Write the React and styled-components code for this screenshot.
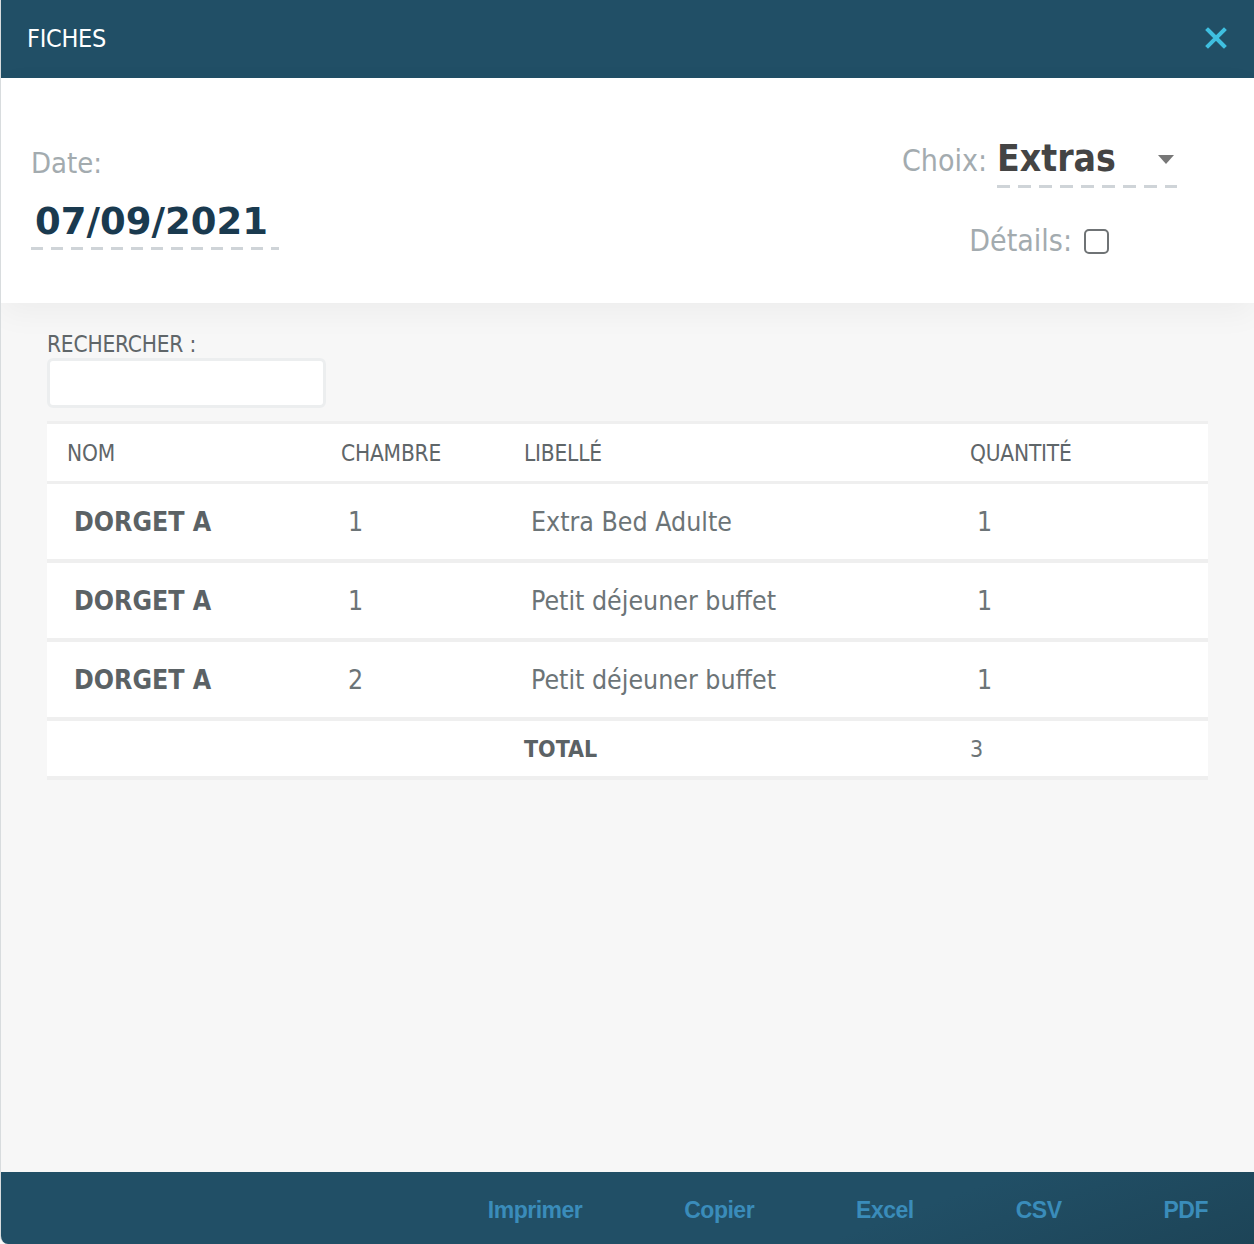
import React from "react";
import styled, { createGlobalStyle } from "styled-components";

const GlobalStyle = createGlobalStyle`
  html, body {
    margin: 0;
    padding: 0;
    background: #f7f7f7;
  }
  * {
    box-sizing: border-box;
  }
`;

const dashed = (period, dash) => `
  background-image: linear-gradient(to right, #cfd4d8 ${dash}px, transparent ${dash}px);
  background-size: ${period}px 3px;
  background-repeat: repeat-x;
  background-position: left bottom;
`;

const Modal = styled.div`
  height: 100vh;
  display: flex;
  flex-direction: column;
  font-family: "DejaVu Sans Condensed", "DejaVu Sans", sans-serif;
  background: #f7f7f7;
  border-left: 1px solid #d8dcde;
  border-bottom-left-radius: 8px;
  overflow: hidden;
`;

const Header = styled.div`
  height: 78px;
  flex-shrink: 0;
  background: #214f66;
  display: flex;
  align-items: center;
  justify-content: space-between;
  padding: 0 26px 2px 26px;
`;

const Title = styled.span`
  color: #fff;
  font-size: 25px;
  letter-spacing: -0.3px;
`;

const CloseButton = styled.button`
  background: none;
  border: none;
  padding: 0;
  width: 24px;
  height: 24px;
  display: flex;
  align-items: center;
  justify-content: center;
  cursor: pointer;
`;

//Filters
const FilterPanel = styled.div`
  height: 225px;
  flex-shrink: 0;
  background: #fff;
  display: flex;
  justify-content: space-between;
  padding: 68px 77px 0 30px;
  box-shadow: 0 10px 30px rgba(0, 0, 0, 0.045);
  position: relative;
  z-index: 1;
`;

const DateBlock = styled.div`
  display: flex;
  flex-direction: column;
`;

const Label = styled.span`
  color: #a3abaf;
  font-size: ${(p) => p.size || 29}px;
  line-height: 34px;
`;

const DateValue = styled.div`
  margin-top: 17px;
  font-family: "DejaVu Sans", sans-serif;
  font-weight: bold;
  font-size: 37px;
  color: #1a3a4f;
  padding: 0 6px 3px 4px;
  width: 248px;
  line-height: 50px;
  ${dashed(20, 12)}
`;

const ChoiceBlock = styled.div`
  display: flex;
  flex-direction: column;
  align-items: flex-end;
`;

const ChoiceRow = styled.div`
  display: flex;
  align-items: center;
  margin-top: -13px;
`;

const Select = styled.div`
  margin-left: 10px;
  width: 180px;
  display: flex;
  align-items: center;
  justify-content: space-between;
  padding: 0 2px 3px 0;
  font-weight: bold;
  font-size: 37px;
  color: #444;
  line-height: 52px;
  ${dashed(21, 13)}
`;

const Caret = styled.span`
  width: 0;
  height: 0;
  border-left: 8px solid transparent;
  border-right: 8px solid transparent;
  border-top: 9px solid #777;
  margin-right: 1px;
`;

const DetailsRow = styled.div`
  display: flex;
  align-items: center;
  margin-top: 36px;
  margin-right: 68px;
`;

const Checkbox = styled.span`
  width: 25px;
  height: 25px;
  margin-left: 12px;
  border: 2px solid #6f7375;
  border-radius: 5px;
  background: #fff;
`;

//Table area
const Body = styled.div`
  flex: 1;
  padding: 28px 46px 0 46px;
`;

const SearchLabel = styled.div`
  color: #5f6669;
  font-size: 22.5px;
  letter-spacing: -0.2px;
`;

const SearchInput = styled.input`
  display: block;
  margin-top: 1px;
  width: 279px;
  height: 50px;
  border: 3px solid #eceeef;
  border-radius: 6px;
  background: #fff;
  outline: none;
`;

const Table = styled.div`
  margin-top: 13px;
  border-top: 3px solid #efefef;
`;

const Row = styled.div`
  display: grid;
  grid-template-columns: 274px 183px 446px 1fr;
  align-items: center;
  height: ${(p) => p.h}px;
  background: #fff;
  border-bottom: ${(p) => p.border}px solid #efefef;
`;

const HeadCell = styled.div`
  padding-left: 20px;
  color: #5f6669;
  font-size: 22.5px;
  letter-spacing: -0.2px;
`;

const Cell = styled.div`
  padding-left: ${(p) => (p.tight ? 20 : 27)}px;
  color: ${(p) => (p.bold ? "#5b6265" : "#6c7477")};
  font-weight: ${(p) => (p.bold ? "bold" : "normal")};
  font-size: ${(p) => p.size || 26.5}px;
`;

const Footer = styled.div`
  height: 72px;
  flex-shrink: 0;
  background: linear-gradient(160deg, #214f66 70%, #1d4457 100%);
  display: flex;
  justify-content: flex-end;
  align-items: center;
  padding: 4px 46px 0 0;
`;

const ExportButton = styled.button`
  background: none;
  border: none;
  padding: 0;
  margin-left: ${(p) => p.gap}px;
  font-family: "Liberation Sans", Arial, sans-serif;
  font-weight: bold;
  font-size: 23px;
  letter-spacing: -0.5px;
  color: #3a8cba;
  cursor: pointer;
`;

const rows = [
  { nom: "DORGET A", chambre: "1", libelle: "Extra Bed Adulte", qte: "1" },
  { nom: "DORGET A", chambre: "1", libelle: "Petit déjeuner buffet", qte: "1" },
  { nom: "DORGET A", chambre: "2", libelle: "Petit déjeuner buffet", qte: "1" },
];

const exports = [
  { label: "Imprimer", gap: 0 },
  { label: "Copier", gap: 102 },
  { label: "Excel", gap: 102 },
  { label: "CSV", gap: 102 },
  { label: "PDF", gap: 102 },
];

const App = () => {
  return (
    <>
      <GlobalStyle />
      <Modal>
        <Header>
          <Title>FICHES</Title>
          <CloseButton>
            <svg width="22" height="22" viewBox="0 0 22 22">
              <path
                d="M3 3 L19 19 M19 3 L3 19"
                stroke="#3fbfe0"
                strokeWidth="4"
                strokeLinecap="square"
              />
            </svg>
          </CloseButton>
        </Header>

        <FilterPanel>
          <DateBlock>
            <Label>Date:</Label>
            <DateValue>07/09/2021</DateValue>
          </DateBlock>
          <ChoiceBlock>
            <ChoiceRow>
              <Label size={30}>Choix:</Label>
              <Select>
                Extras
                <Caret />
              </Select>
            </ChoiceRow>
            <DetailsRow>
              <Label size={30}>Détails:</Label>
              <Checkbox />
            </DetailsRow>
          </ChoiceBlock>
        </FilterPanel>

        <Body>
          <SearchLabel>RECHERCHER :</SearchLabel>
          <SearchInput type="text" />
          <Table>
            <Row h={60} border={3}>
              <HeadCell>NOM</HeadCell>
              <HeadCell>CHAMBRE</HeadCell>
              <HeadCell>LIBELLÉ</HeadCell>
              <HeadCell>QUANTITÉ</HeadCell>
            </Row>
            {rows.map((r, i) => (
              <Row key={i} h={79} border={4}>
                <Cell bold>{r.nom}</Cell>
                <Cell>{r.chambre}</Cell>
                <Cell>{r.libelle}</Cell>
                <Cell>{r.qte}</Cell>
              </Row>
            ))}
            <Row h={59} border={4}>
              <div />
              <div />
              <Cell tight bold size={23}>
                TOTAL
              </Cell>
              <Cell tight size={23}>
                3
              </Cell>
            </Row>
          </Table>
        </Body>

        <Footer>
          {exports.map((e) => (
            <ExportButton key={e.label} gap={e.gap}>
              {e.label}
            </ExportButton>
          ))}
        </Footer>
      </Modal>
    </>
  );
};

export default App;
